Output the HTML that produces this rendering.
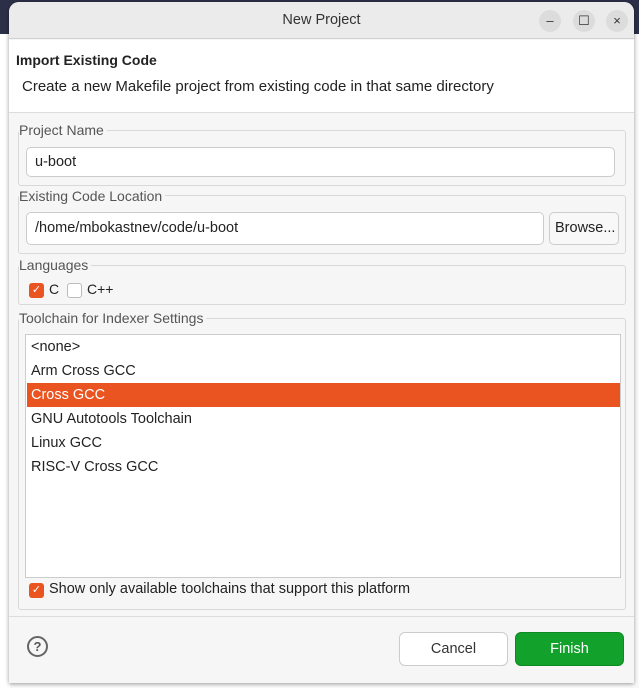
<!DOCTYPE html>
<html><head><style>
*{box-sizing:border-box;margin:0;padding:0}
body{width:639px;height:688px;background:#fafafa;font-family:"Liberation Sans",sans-serif;font-size:14px;color:#222;position:relative;overflow:hidden}
.bgtop{position:absolute;left:0;top:0;width:639px;height:34px;background:#2c2f48}
.bgleft{position:absolute;left:0;top:34px;width:10px;height:654px;background:#fff}
.dlg{position:absolute;left:9px;top:2px;width:625px;height:681px;background:#f6f6f6;border-radius:10px 10px 0 0;box-shadow:0 1px 4px rgba(0,0,0,.4);overflow:hidden}
.title{height:37px;background:#ebebeb;border-bottom:1px solid #d0d0d0;text-align:center;line-height:36px;font-size:14.5px;color:#333}
.wb{position:absolute;top:8px;width:22px;height:22px;border-radius:11px;background:#dcdcdc;font-size:13px;line-height:22px;text-align:center;color:#333}
.head{position:absolute;top:38px;left:0;width:625px;height:73px;background:#fff;border-bottom:1px solid #ddd}
.a{position:absolute}
.grp{position:absolute;border:1px solid #d8d8d8;border-radius:3px}
.lbl{position:absolute;color:#555;font-size:14px;background:#f6f6f6;padding-right:3px}
.inp{position:absolute;background:#fff;border:1px solid #ccc;border-radius:5px;padding-left:8px;line-height:28px;font-size:14.5px}
.cb{position:absolute;width:15px;height:15px;border-radius:3px}
.on{background:#e95420;color:#fff;font-size:11px;line-height:15px;text-align:center}
.off{background:#fff;border:1px solid #bbb}
.row{position:absolute;left:1px;width:593px;height:24px;line-height:24px;padding-left:4px;font-size:14.5px}
.btn{position:absolute;top:630px;width:109px;height:34px;border-radius:6px;text-align:center;line-height:32px;font-size:14.5px}
</style></head><body>
<div class="bgtop"></div><div class="bgleft"></div>
<div class="dlg">
<div class="title">New Project</div>
<div class="wb" style="left:530px">–</div>
<div class="wb" style="left:564px">☐</div>
<div class="wb" style="left:597px">×</div>
<div class="head">
<div class="a" style="left:7px;top:12px;font-weight:bold;font-size:14px">Import Existing Code</div>
<div class="a" style="left:13px;top:38px;font-size:15px">Create a new Makefile project from existing code in that same directory</div>
</div>
<div class="grp" style="left:9px;top:128px;width:608px;height:56px"></div>
<div class="lbl" style="left:10px;top:120px">Project Name</div>
<div class="inp" style="left:17px;top:145px;width:589px;height:30px">u-boot</div>
<div class="grp" style="left:9px;top:193px;width:608px;height:59px"></div>
<div class="lbl" style="left:10px;top:186px">Existing Code Location</div>
<div class="inp" style="left:17px;top:210px;width:518px;height:33px;line-height:31px">/home/mbokastnev/code/u-boot</div>
<div class="inp" style="left:540px;top:210px;width:70px;height:33px;line-height:31px;padding-left:5px;background:#f8f8f8">Browse...</div>
<div class="grp" style="left:9px;top:263px;width:608px;height:40px"></div>
<div class="lbl" style="left:10px;top:255px">Languages</div>
<div class="cb on" style="left:20px;top:281px">✓</div><div class="a" style="left:40px;top:279px">C</div>
<div class="cb off" style="left:58px;top:281px"></div><div class="a" style="left:78px;top:279px">C++</div>
<div class="grp" style="left:9px;top:316px;width:608px;height:292px"></div>
<div class="lbl" style="left:10px;top:308px">Toolchain for Indexer Settings</div>
<div class="a" style="left:16px;top:332px;width:596px;height:244px;background:#fff;border:1px solid #ccc">
<div class="row" style="top:0px">&lt;none&gt;</div>
<div class="row" style="top:24px">Arm Cross GCC</div>
<div class="row" style="top:48px;background:#e95420;color:#fff">Cross GCC</div>
<div class="row" style="top:72px">GNU Autotools Toolchain</div>
<div class="row" style="top:96px">Linux GCC</div>
<div class="row" style="top:120px">RISC-V Cross GCC</div>
</div>
<div class="cb on" style="left:20px;top:581px">✓</div>
<div class="a" style="left:40px;top:579px;font-size:14.5px">Show only available toolchains that support this platform</div>
<div class="a" style="left:0;top:614px;width:625px;border-top:1px solid #ddd"></div>
<div class="a" style="left:18px;top:634px;width:21px;height:21px;border:2px solid #666;border-radius:50%;text-align:center;line-height:17px;font-weight:bold;color:#555;font-size:13px">?</div>
<div class="btn" style="left:390px;background:#fff;border:1px solid #ccc;color:#333">Cancel</div>
<div class="btn" style="left:506px;background:#12a12a;border:1px solid #0e8a22;color:#fff">Finish</div>
</div>
</body></html>
